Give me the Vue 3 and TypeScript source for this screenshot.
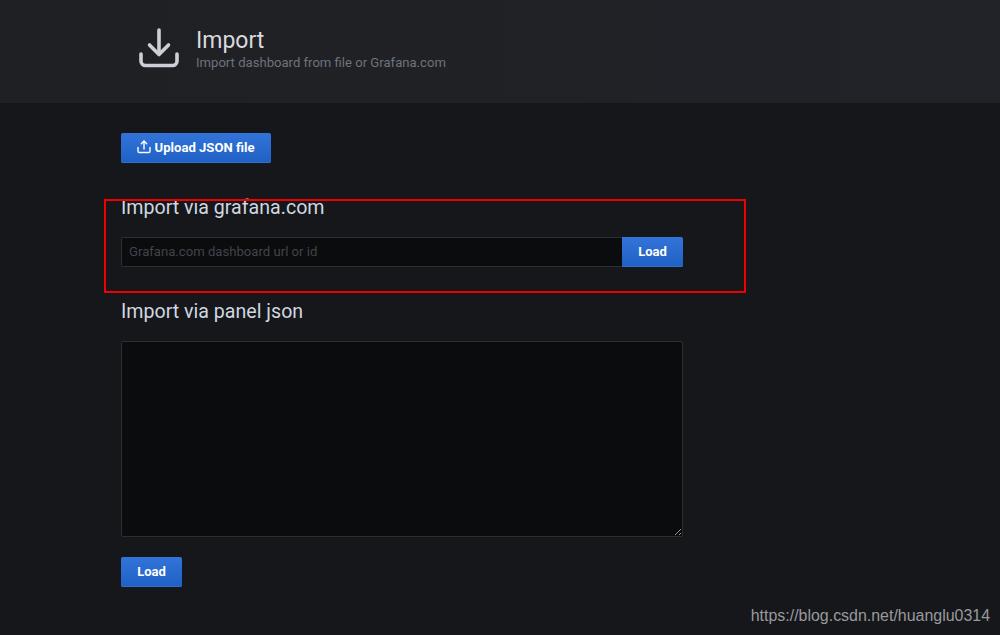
<script setup lang="ts">
const title = 'Import'
const subtitle = 'Import dashboard from file or Grafana.com'
</script>

<template>
  <div class="page">
    <header class="head">
      <svg class="head-icon" viewBox="0 0 40 40" width="40" height="40" fill="none" stroke="#ccd0d6" stroke-width="3.6" stroke-linecap="round" stroke-linejoin="round">
        <path d="M20 2v24" />
        <path d="M10.5 17 20 26.5 29.500 17" />
        <path d="M2 26v7a4.500 4.500 0 0 0 4.500 4.500h27A4.500 4.500 0 0 0 38 33v-7" />
      </svg>
      <div class="head-text">
        <h1>{{ title }}</h1>
        <p>{{ subtitle }}</p>
      </div>
    </header>
    <main class="body">
      <button class="btn upload" type="button">
        <svg viewBox="0 0 14 14" width="14" height="14" fill="none" stroke="#fff" stroke-width="1.400" stroke-linecap="round" stroke-linejoin="round">
          <path d="M7 9V1.200" />
          <path d="M4.300 3.700 7 1l2.700 2.700" />
          <path d="M1 7.500v3.700A1.300 1.300 0 0 0 2.300 12.500h9.400a1.300 1.300 0 0 0 1.300-1.300V7.500" />
        </svg>
        Upload JSON file
      </button>
      <h2 class="first">Import via grafana.com</h2>
      <div class="row">
        <input class="field" type="text" placeholder="Grafana.com dashboard url or id" />
        <button class="btn joined" type="button">Load</button>
      </div>
      <h2 class="second">Import via panel json</h2>
      <textarea class="area"></textarea>
      <button class="btn load" type="button">Load</button>
    </main>
    <div class="mark"></div>
    <div class="watermark">https://blog.csdn.net/huanglu0314</div>
  </div>
</template>

<style>
html, body { margin: 0; background: #16171b; }
</style>

<style scoped>
.page { position: relative; width: 1000px; height: 635px; overflow: hidden; background: #16171b; font-family: Roboto, "Liberation Sans", sans-serif; color: #d8d9da; }
.head { height: 103px; box-sizing: border-box; padding: 27px 0 0 139px; display: flex; gap: 17px; background: linear-gradient(90deg, #1f2024, #212328); }
.head-icon { flex: none; margin-top: 1px; }
.head-text { padding-top: 2px; }
h1 { margin: 0; font-size: 23px; font-weight: 400; line-height: 24px; color: #d8dadd; }
.head-text p { margin: 2px 0 0; font-size: 13.100px; line-height: 16px; color: #6c737d; }
.body { padding: 30px 0 0 121px; width: 562px; display: flex; flex-direction: column; align-items: flex-start; }
.btn { box-sizing: border-box; height: 30px; border: 0; border-radius: 2px; color: #fff; font: 700 13px Roboto, "Liberation Sans", sans-serif; background: linear-gradient(180deg, #3274d9, #1f60c4); display: flex; align-items: center; justify-content: center; box-shadow: inset 0 -1px 0 #2f6fd0; padding: 0 0 2px; }
.upload { width: 150px; gap: 4px; font-size: 13.100px; }
.upload svg { margin-left: -1px; }
h2 { margin: 0; font-size: 19.600px; font-weight: 400; line-height: 22px; color: #d0d8e0; }
.first { margin-top: 34px; }
.row { display: flex; width: 562px; margin-top: 18px; }
.field { flex: 1; min-width: 0; box-sizing: border-box; height: 30px; padding: 0 7px 2px; background: #0b0c0e; border: 1px solid #2c2e32; border-right: 0; border-radius: 2px 0 0 2px; font: 400 13.130px Roboto, "Liberation Sans", sans-serif; color: #d8d9da; outline: none; }
.field::placeholder { color: #41444a; opacity: 1; }
.joined { width: 61px; border-radius: 0 2px 2px 0; }
.second { margin-top: 34px; }
.area { display: block; box-sizing: border-box; width: 562px; height: 196px; margin-top: 18px; background: #0b0c0e; border: 1px solid #2c2e32; border-radius: 2px; outline: none; resize: vertical; }
.load { width: 61px; margin-top: 20px; }
.mark { position: absolute; left: 104px; top: 199px; width: 642px; height: 94px; box-sizing: border-box; border: 2px solid #f00000; }
.watermark { position: absolute; right: 10px; top: 607px; font: 400 15.950px "Liberation Sans", sans-serif; color: #9a9a9c; white-space: nowrap; }
</style>
